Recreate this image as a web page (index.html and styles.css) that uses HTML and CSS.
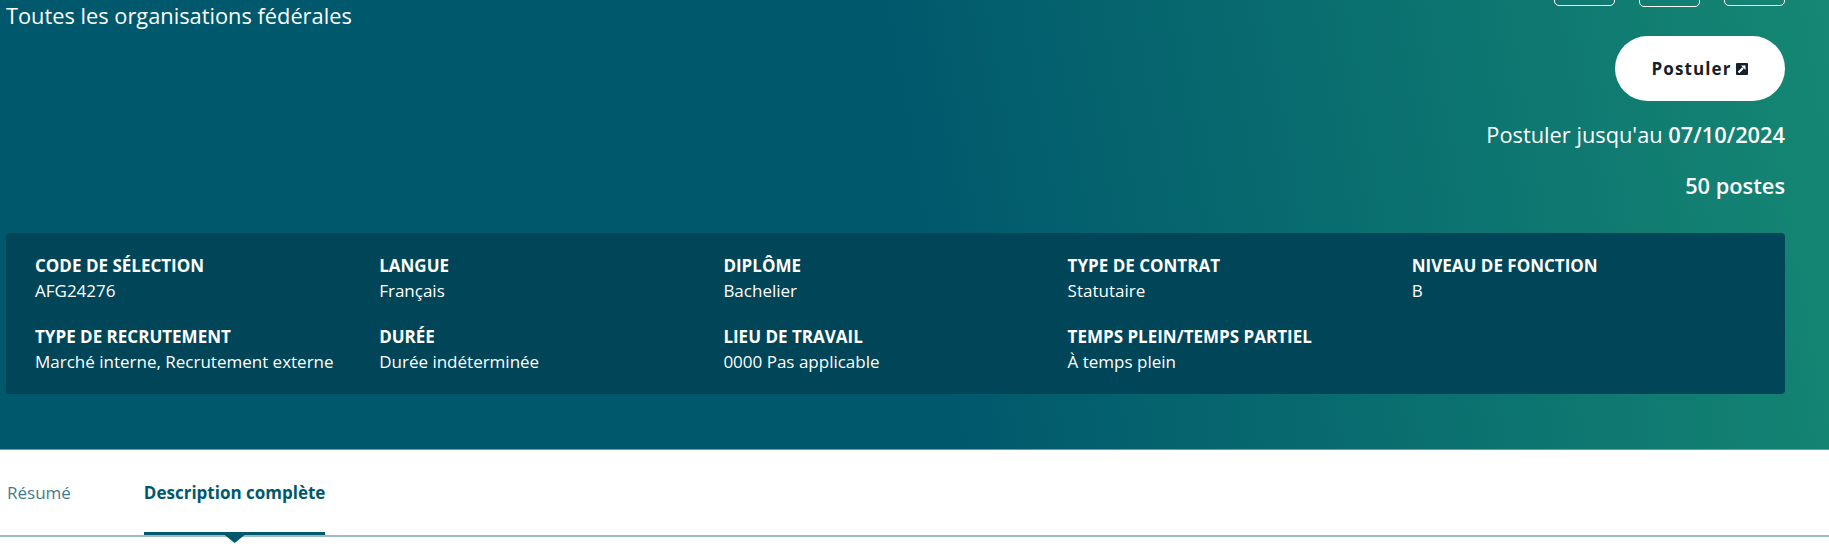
FILE: index.html
```html
<!DOCTYPE html>
<html lang="fr">

<head>
  <meta charset="UTF-8" />
  <title>Postuler</title>
  <link rel="stylesheet" href="styles.css">
</head>

<body>
  <header class="job_header">
    <div class="job_top">
      <p class="job_org">Toutes les organisations fédérales</p>
      <div class="job_actions">
        <div class="share_row">
          <span class="share_btn"></span>
          <span class="share_btn share_btn--low"></span>
          <span class="share_btn"></span>
        </div>
        <a class="apply_btn" href="#">Postuler
          <svg class="apply_icon" viewBox="0 0 12 12" width="12" height="12" aria-hidden="true">
            <rect width="12" height="12" rx="1" fill="#14212a" />
            <path d="M5 2.500h4.500V7z" fill="#fff" />
            <path d="M2.500 9.500 7 5" stroke="#fff" stroke-width="2.200" fill="none" />
          </svg>
        </a>
        <p class="apply_date">Postuler jusqu'au <strong>07/10/2024</strong></p>
        <p class="apply_count">50 postes</p>
      </div>
    </div>

    <div class="job_panel">
      <div class="job_field">
        <h4>CODE DE SÉLECTION</h4>
        <p>AFG24276</p>
      </div>
      <div class="job_field">
        <h4>LANGUE</h4>
        <p>Français</p>
      </div>
      <div class="job_field">
        <h4>DIPLÔME</h4>
        <p>Bachelier</p>
      </div>
      <div class="job_field">
        <h4>TYPE DE CONTRAT</h4>
        <p>Statutaire</p>
      </div>
      <div class="job_field">
        <h4>NIVEAU DE FONCTION</h4>
        <p>B</p>
      </div>
      <div class="job_field">
        <h4>TYPE DE RECRUTEMENT</h4>
        <p>Marché interne, Recrutement externe</p>
      </div>
      <div class="job_field">
        <h4>DURÉE</h4>
        <p>Durée indéterminée</p>
      </div>
      <div class="job_field">
        <h4>LIEU DE TRAVAIL</h4>
        <p>0000 Pas applicable</p>
      </div>
      <div class="job_field">
        <h4>TEMPS PLEIN/TEMPS PARTIEL</h4>
        <p>À temps plein</p>
      </div>
    </div>
  </header>

  <nav class="tabs">
    <a class="tab" href="#">Résumé</a>
    <a class="tab tab--active" href="#">Description complète</a>
  </nav>
</body>

</html>
```

FILE: styles.css
```css
body {
  margin: 0;
  padding: 0;
  min-height: 100vh;
  background: #fff;
  font-family: "Open Sans", "Liberation Sans", sans-serif;
}

p,
h4 {
  margin: 0;
}

.job_header {
  box-sizing: border-box;
  height: 450px;
  padding: 0 44px 0 6px;
  background: linear-gradient(80deg, #00586c 0%, #00586c 50%, #158773 100%);
  border-bottom: 1px solid #5fa3a5;
  color: #fff;
}

.job_top {
  display: flex;
  justify-content: space-between;
  height: 233px;
}

.job_org {
  font-size: 21.8px;
  line-height: 30px;
  padding-top: 1px;
}

.job_actions {
  display: flex;
  flex-direction: column;
  align-items: flex-end;
}

.share_row {
  display: flex;
  gap: 24px;
  align-items: flex-end;
  height: 7px;
  overflow: hidden;
}

.share_btn {
  box-sizing: border-box;
  flex: none;
  width: 61px;
  height: 30px;
  margin-bottom: 1px;
  border: 1px solid #fff;
  border-radius: 5px;
}

.share_btn--low {
  margin-bottom: 0;
}

.apply_btn {
  display: flex;
  align-items: center;
  justify-content: center;
  gap: 5px;
  width: 170px;
  height: 65px;
  margin-top: 29px;
  border-radius: 33px;
  background: #fff;
  color: #14212a;
  font-size: 17px;
  font-weight: 700;
  letter-spacing: 1.1px;
  text-decoration: none;
}

.apply_date {
  margin-top: 19px;
  font-size: 21.8px;
  line-height: 30px;
}

.apply_date strong {
  font-weight: 600;
}

.apply_count {
  margin-top: 21px;
  font-size: 21.8px;
  line-height: 30px;
  font-weight: 600;
}

.job_panel {
  box-sizing: border-box;
  display: grid;
  grid-template-columns: repeat(5, 1fr);
  row-gap: 22px;
  height: 161px;
  padding: 21px 29px;
  border-radius: 4px;
  background: #004658;
}

.job_field h4 {
  font-size: 17px;
  line-height: 24px;
  font-weight: 700;
}

.job_field p {
  font-size: 17px;
  line-height: 25px;
}

.tabs {
  display: flex;
  gap: 73px;
  height: 85px;
  padding-left: 7px;
  border-bottom: 2px solid #9bbcc4;
}

.tab {
  position: relative;
  height: 85px;
  padding-top: 31px;
  box-sizing: border-box;
  font-size: 17px;
  line-height: 24px;
  color: #3f7d8d;
  text-decoration: none;
}

.tab--active {
  border-bottom: 3px solid #00586c;
  color: #00586c;
  font-weight: 700;
}

.tab--active::after {
  content: "";
  position: absolute;
  top: 100%;
  left: 50%;
  width: 20px;
  height: 11px;
  margin-left: -10px;
  background: #00586c;
  clip-path: polygon(0 0, 100% 0, 100% 27%, 50% 100%, 0 27%);
}
```
